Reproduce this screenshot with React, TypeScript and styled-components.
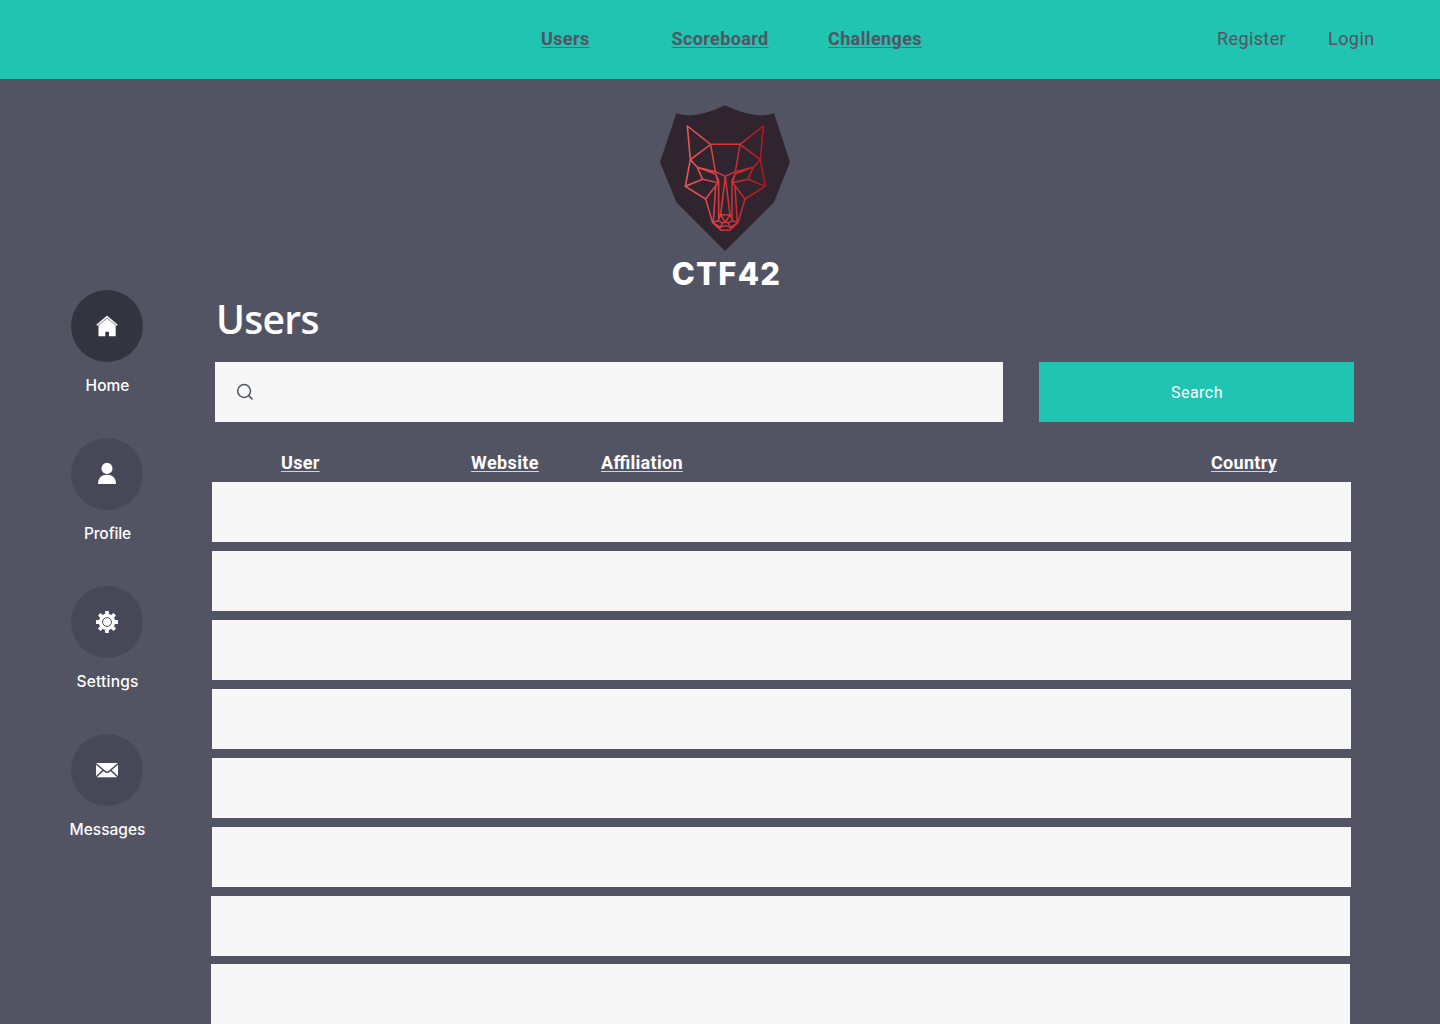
import React from "react";
import styled, { createGlobalStyle } from "styled-components";

const GlobalStyle = createGlobalStyle`
  *, *::before, *::after { box-sizing: border-box; }
  body { margin: 0; background: #535463; }
`;

const Page = styled.div`
  width: 1440px;
  height: 1024px;
  overflow: hidden;
  background: #535463;
  font-family: Roboto, "Liberation Sans", sans-serif;
  color: #fff;
`;

const Header = styled.header`
  display: flex;
  align-items: center;
  height: 79px;
  padding: 0 65.5px 1px 541px;
  background: #21c3b1;
`;

const NavLink = styled.a<{ $width: number; $gap?: number }>`
  width: ${(p) => p.$width}px;
  margin-right: ${(p) => p.$gap ?? 0}px;
  font-size: 18px;
  line-height: 24px;
  font-weight: 700;
  letter-spacing: 0.38px;
  white-space: nowrap;
  color: #535463;
  text-decoration: underline;
  text-decoration-color: rgba(83, 84, 99, 0.8);
  text-decoration-thickness: 1px;
  text-underline-offset: 2px;
`;

const Account = styled.div`
  display: flex;
  gap: 42px;
  margin-left: auto;
`;

const AccountLink = styled.a`
  font-size: 18px;
  line-height: 24px;
  letter-spacing: 0.4px;
  color: #535463;
`;

const Brand = styled.div`
  display: flex;
  flex-direction: column;
  align-items: center;
  height: 211px;
  padding: 26px 0 0 10px;
`;

const BrandName = styled.div`
  flex: none;
  margin: 3px 0 0 3px;
  font-family: Inter, sans-serif;
  font-size: 31px;
  line-height: 40px;
  font-weight: 800;
  letter-spacing: 1.2px;
`;

const Body = styled.div`
  display: grid;
  grid-template-columns: 211px 1fr;
`;

const Sidebar = styled.nav`
  display: flex;
  flex-direction: column;
  align-items: center;
  gap: 40px;
  padding-left: 3px;
`;

const SideItem = styled.a`
  display: flex;
  flex-direction: column;
  align-items: center;
  height: 108px;
`;

const Disc = styled.span<{ $active?: boolean }>`
  display: flex;
  align-items: center;
  justify-content: center;
  width: 72px;
  height: 72px;
  border-radius: 50%;
  background: ${(p) => (p.$active ? "#32343f" : "#464857")};
`;

const SideLabel = styled.span<{ $spacing: number }>`
  margin: 13px 0 0 1px;
  font-family: Inter, sans-serif;
  font-size: 15.5px;
  line-height: 22px;
  font-weight: 500;
  letter-spacing: ${(p) => p.$spacing}px;
`;

const Content = styled.main`
  display: flex;
  flex-direction: column;
`;

const Title = styled.h1`
  margin: 0;
  height: 72px;
  padding-left: 5px;
  font-family: "Open Sans", "Noto Sans", sans-serif;
  font-size: 39px;
  line-height: 57px;
  font-weight: 600;
  letter-spacing: -0.7px;
`;

const SearchBar = styled.form`
  display: flex;
  gap: 36px;
  padding-left: 4px;
`;

const SearchField = styled.label`
  display: flex;
  align-items: center;
  width: 788px;
  height: 60px;
  padding-left: 21px;
  background: #f7f7f7;
`;

const SearchInput = styled.input`
  flex: 1;
  margin-left: 10px;
  border: 0;
  outline: 0;
  background: transparent;
  font: 16px Roboto, sans-serif;
`;

const SearchButton = styled.button`
  width: 315px;
  height: 60px;
  padding: 0 0 0 1px;
  border: 0;
  background: #21c3b1;
  color: #fff;
  font: 16px Roboto, sans-serif;
  letter-spacing: 0.45px;
`;

const TableHead = styled.div`
  display: grid;
  grid-template-columns: 190px 130px 610px auto;
  height: 60px;
  padding: 29px 0 0 70px;
`;

const HeadCell = styled.span<{ $spacing?: number }>`
  font-size: 18px;
  line-height: 24px;
  font-weight: 700;
  letter-spacing: ${(p) => p.$spacing ?? 0.3}px;
  font-feature-settings: "liga" 1;
  text-decoration: underline;
  text-decoration-color: rgba(255, 255, 255, 0.75);
  text-decoration-thickness: 1px;
  text-underline-offset: 2px;
`;

const Row = styled.div<{ $indent: number; $gap: number }>`
  width: 1139px;
  height: 60px;
  margin: 0 0 ${(p) => p.$gap}px ${(p) => p.$indent}px;
  background: #f7f7f7;
`;

const Shield = styled.svg`
  flex: none;
  display: block;
`;

const FACE_HALF =
  "M182 147L112 92L121 193L182 147L196 229M121 193L106 273L167 311L188 382L214 405H226 M121 193L142 216L158 252L106 273 M142 216L196 229L226 243 M142 216L197 236L204 262L158 252 M204 262L167 311 M197 272L190 382 M197 236L206 256V376 M204 262L197 272 M226 243L212 358L226 382 M212 358H226 M212 358L204 376L188 382 M204 376L217 383L226 380 M188 382L212 396L226 390 M217 383L212 396";

const WolfShield = () => (
  <Shield width="130" height="146" viewBox="30 29 390 438" fill="none">
    <defs>
      <linearGradient id="wolf" gradientUnits="userSpaceOnUse" x1="106" y1="200" x2="346" y2="200">
        <stop offset="0" stopColor="#ee5a5b" />
        <stop offset="1" stopColor="#b2141b" />
      </linearGradient>
      <linearGradient id="wolfMirror" gradientUnits="userSpaceOnUse" x1="346" y1="200" x2="106" y2="200">
        <stop offset="0" stopColor="#ee5a5b" />
        <stop offset="1" stopColor="#b2141b" />
      </linearGradient>
    </defs>
    <path
      d="M225 30Q274 54 318 59Q350 62 372 54L420 200L372 321L225 467L79 321L30 200L79 54Q101 62 133 59Q176 54 225 30Z"
      fill="#30242e"
    />
    <g strokeWidth="4.6" strokeLinejoin="round">
      <path d={FACE_HALF} stroke="url(#wolf)" />
      <path d={FACE_HALF} stroke="url(#wolfMirror)" transform="matrix(-1 0 0 1 452 0)" />
      <path d="M182 147H270V147.1" stroke="#d5363b" />
    </g>
  </Shield>
);

const HomeIcon = () => (
  <svg width="22" height="22" viewBox="0 0 22 22">
    <path d="M11 1L21.3 9.7L20.6 10.5L11 2.6L1.4 10.5L.7 9.7Z" fill="#fff" stroke="#fff" strokeWidth=".7" />
    <path d="M11 3.5L19.7 10.6V21.3H13V16.8H9.3V21.3H2.5V10.6Z" fill="#fff" />
  </svg>
);

const ProfileIcon = () => (
  <svg width="22" height="22" viewBox="0 0 22 22" fill="#fff">
    <circle cx="11" cy="5.4" r="5.5" />
    <path d="M2 21C2 15 5.7 11.8 11 11.8S20 15 20 21Z" />
  </svg>
);

const TEETH = [0, 45, 90, 135, 180, 225, 270, 315];

const SettingsIcon = () => (
  <svg width="22" height="22" viewBox="0 0 22 22" fill="#fff">
    <circle cx="11" cy="11" r="8.3" />
    {TEETH.map((angle) => (
      <rect key={angle} x="9.1" y="0" width="3.8" height="5" rx=".4" transform={`rotate(${angle} 11 11)`} />
    ))}
    <circle cx="11" cy="11" r="4.4" stroke="#464857" strokeWidth="1" />
  </svg>
);

const MessagesIcon = () => (
  <svg width="22" height="22" viewBox="0 0 22 22">
    <rect y="4" width="22" height="14.3" rx="1" fill="#fff" />
    <path
      d="M0 4.8L8.5 12Q11 14.5 13.5 12L22 4.8M0 18L7.2 11.4M22 18L14.8 11.4"
      fill="none"
      stroke="#464857"
      strokeWidth="1.5"
    />
  </svg>
);

const SearchIcon = () => (
  <svg width="18" height="18" viewBox="0 0 18 18" fill="none" stroke="#535463" strokeWidth="1.5">
    <circle cx="8.1" cy="8" r="6.4" />
    <path d="M12.7 12.6L16.5 16.4" />
  </svg>
);

const SIDE_ITEMS = [
  { label: "Home", Icon: HomeIcon, active: true, spacing: 0 },
  { label: "Profile", Icon: ProfileIcon, spacing: -0.1 },
  { label: "Settings", Icon: SettingsIcon, spacing: 0.2 },
  { label: "Messages", Icon: MessagesIcon, spacing: 0 },
];

const ROWS = [
  { indent: 1, gap: 9 },
  { indent: 1, gap: 9 },
  { indent: 1, gap: 9 },
  { indent: 1, gap: 9 },
  { indent: 1, gap: 9 },
  { indent: 1, gap: 9 },
  { indent: 0, gap: 8 },
  { indent: 0, gap: 0 },
];

export default function App() {
  return (
    <Page>
      <GlobalStyle />
      <Header>
        <NavLink $width={49} $gap={81.5}>Users</NavLink>
        <NavLink $width={98} $gap={58.5}>Scoreboard</NavLink>
        <NavLink $width={95}>Challenges</NavLink>
        <Account>
          <AccountLink>Register</AccountLink>
          <AccountLink>Login</AccountLink>
        </Account>
      </Header>
      <Brand>
        <WolfShield />
        <BrandName>CTF42</BrandName>
      </Brand>
      <Body>
        <Sidebar>
          {SIDE_ITEMS.map(({ label, Icon, active, spacing }) => (
            <SideItem key={label}>
              <Disc $active={active}>
                <Icon />
              </Disc>
              <SideLabel $spacing={spacing}>{label}</SideLabel>
            </SideItem>
          ))}
        </Sidebar>
        <Content>
          <Title>Users</Title>
          <SearchBar>
            <SearchField>
              <SearchIcon />
              <SearchInput aria-label="Search" />
            </SearchField>
            <SearchButton type="button">Search</SearchButton>
          </SearchBar>
          <TableHead>
            <HeadCell>User</HeadCell>
            <HeadCell $spacing={0.4}>Website</HeadCell>
            <HeadCell>Affiliation</HeadCell>
            <HeadCell>Country</HeadCell>
          </TableHead>
          {ROWS.map((row, index) => (
            <Row key={index} $indent={row.indent} $gap={row.gap} />
          ))}
        </Content>
      </Body>
    </Page>
  );
}
